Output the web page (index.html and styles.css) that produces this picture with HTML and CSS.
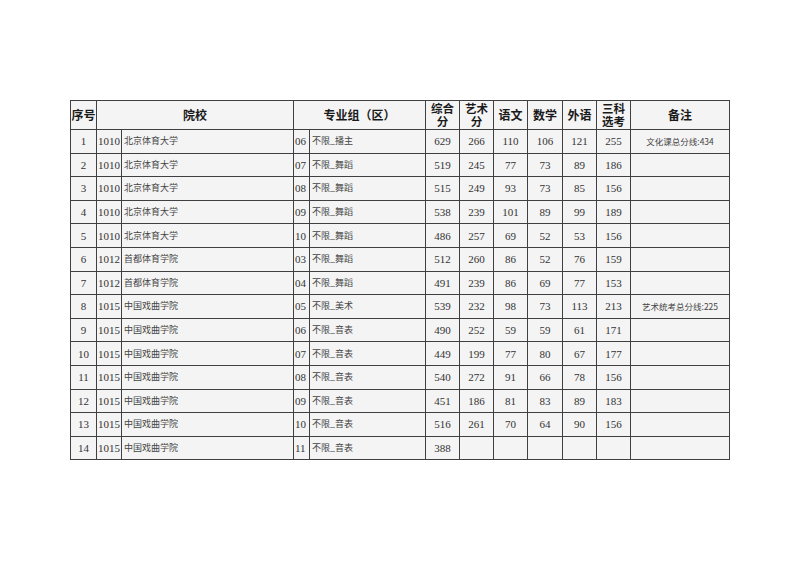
FILE: index.html
```html
<!DOCTYPE html>
<html lang="zh">
<head>
<meta charset="utf-8">
<link rel="stylesheet" href="styles.css">
</head>
<body>
<table class="score">
<colgroup>
<col class="c-no"><col class="c-code"><col class="c-school"><col class="c-gcode"><col class="c-group">
<col class="c-n"><col class="c-n"><col class="c-n"><col class="c-n2"><col class="c-n"><col class="c-n"><col class="c-note">
</colgroup>
<thead>
<tr>
<th>序号</th><th colspan="2">院校</th><th colspan="2">专业组（区）</th>
<th class="two"><span class="ln">综合</span><span class="ln">分</span></th><th class="two"><span class="ln">艺术</span><span class="ln">分</span></th><th>语文</th><th>数学</th><th>外语</th><th class="two"><span class="ln">三科</span><span class="ln">选考</span></th><th>备注</th>
</tr>
</thead>
<tbody>
<tr><td>1</td><td class="code">1010</td><td class="name">北京体育大学</td><td class="code">06</td><td class="name">不限_播主</td><td>629</td><td>266</td><td>110</td><td>106</td><td>121</td><td>255</td><td class="note">文化课总分线:434</td></tr>
<tr><td>2</td><td class="code">1010</td><td class="name">北京体育大学</td><td class="code">07</td><td class="name">不限_舞蹈</td><td>519</td><td>245</td><td>77</td><td>73</td><td>89</td><td>186</td><td class="note"></td></tr>
<tr><td>3</td><td class="code">1010</td><td class="name">北京体育大学</td><td class="code">08</td><td class="name">不限_舞蹈</td><td>515</td><td>249</td><td>93</td><td>73</td><td>85</td><td>156</td><td class="note"></td></tr>
<tr><td>4</td><td class="code">1010</td><td class="name">北京体育大学</td><td class="code">09</td><td class="name">不限_舞蹈</td><td>538</td><td>239</td><td>101</td><td>89</td><td>99</td><td>189</td><td class="note"></td></tr>
<tr><td>5</td><td class="code">1010</td><td class="name">北京体育大学</td><td class="code">10</td><td class="name">不限_舞蹈</td><td>486</td><td>257</td><td>69</td><td>52</td><td>53</td><td>156</td><td class="note"></td></tr>
<tr><td>6</td><td class="code">1012</td><td class="name">首都体育学院</td><td class="code">03</td><td class="name">不限_舞蹈</td><td>512</td><td>260</td><td>86</td><td>52</td><td>76</td><td>159</td><td class="note"></td></tr>
<tr><td>7</td><td class="code">1012</td><td class="name">首都体育学院</td><td class="code">04</td><td class="name">不限_舞蹈</td><td>491</td><td>239</td><td>86</td><td>69</td><td>77</td><td>153</td><td class="note"></td></tr>
<tr><td>8</td><td class="code">1015</td><td class="name">中国戏曲学院</td><td class="code">05</td><td class="name">不限_美术</td><td>539</td><td>232</td><td>98</td><td>73</td><td>113</td><td>213</td><td class="note">艺术统考总分线:225</td></tr>
<tr><td>9</td><td class="code">1015</td><td class="name">中国戏曲学院</td><td class="code">06</td><td class="name">不限_音表</td><td>490</td><td>252</td><td>59</td><td>59</td><td>61</td><td>171</td><td class="note"></td></tr>
<tr><td>10</td><td class="code">1015</td><td class="name">中国戏曲学院</td><td class="code">07</td><td class="name">不限_音表</td><td>449</td><td>199</td><td>77</td><td>80</td><td>67</td><td>177</td><td class="note"></td></tr>
<tr><td>11</td><td class="code">1015</td><td class="name">中国戏曲学院</td><td class="code">08</td><td class="name">不限_音表</td><td>540</td><td>272</td><td>91</td><td>66</td><td>78</td><td>156</td><td class="note"></td></tr>
<tr><td>12</td><td class="code">1015</td><td class="name">中国戏曲学院</td><td class="code">09</td><td class="name">不限_音表</td><td>451</td><td>186</td><td>81</td><td>83</td><td>89</td><td>183</td><td class="note"></td></tr>
<tr><td>13</td><td class="code">1015</td><td class="name">中国戏曲学院</td><td class="code">10</td><td class="name">不限_音表</td><td>516</td><td>261</td><td>70</td><td>64</td><td>90</td><td>156</td><td class="note"></td></tr>
<tr><td>14</td><td class="code">1015</td><td class="name">中国戏曲学院</td><td class="code">11</td><td class="name">不限_音表</td><td>388</td><td></td><td></td><td></td><td></td><td></td><td class="note"></td></tr>
</tbody>
</table>
</body>
</html>
```

FILE: styles.css
```css
html, body {
  margin: 0;
  padding: 0;
  background: #ffffff;
}
body {
  padding: 100px 0 0 70px;
}
.score {
  border-collapse: collapse;
  table-layout: fixed;
  width: 660px;
  background: #f4f4f4;
  font-family: "Liberation Serif", "Noto Sans CJK SC", serif;
  color: #333;
}
.c-no { width: 26px; }
.c-code { width: 25px; }
.c-school { width: 172px; }
.c-gcode { width: 16px; }
.c-group { width: 116px; }
.c-n { width: 34px; }
.c-n2 { width: 35px; }
.c-note { width: 99px; }
.score th, .score td {
  border: 1px solid #404040;
  padding: 0;
  text-align: center;
  vertical-align: middle;
  overflow: hidden;
  white-space: nowrap;
}
.score th {
  height: 28px;
  font-family: "Noto Sans CJK SC", sans-serif;
  font-weight: bold;
  font-size: 12px;
  line-height: 14px;
  color: #1a1a1a;
}
.score th.two {
  font-size: 11.5px;
  line-height: 13px;
}
.score th.two .ln {
  display: block;
  height: 13px;
  line-height: 13px;
}
.score td {
  height: 22.6px;
  font-size: 11px;
  line-height: 12px;
}
.score td.code {
  text-align: left;
  padding-left: 1px;
}
.score td.name {
  text-align: left;
  padding-left: 2px;
  font-family: "Noto Sans CJK SC", sans-serif;
  font-size: 9px;
  color: #444;
}
.score td.note {
  font-family: "Noto Sans CJK SC", "Liberation Serif", sans-serif;
  font-size: 8.5px;
  color: #444;
}
```
